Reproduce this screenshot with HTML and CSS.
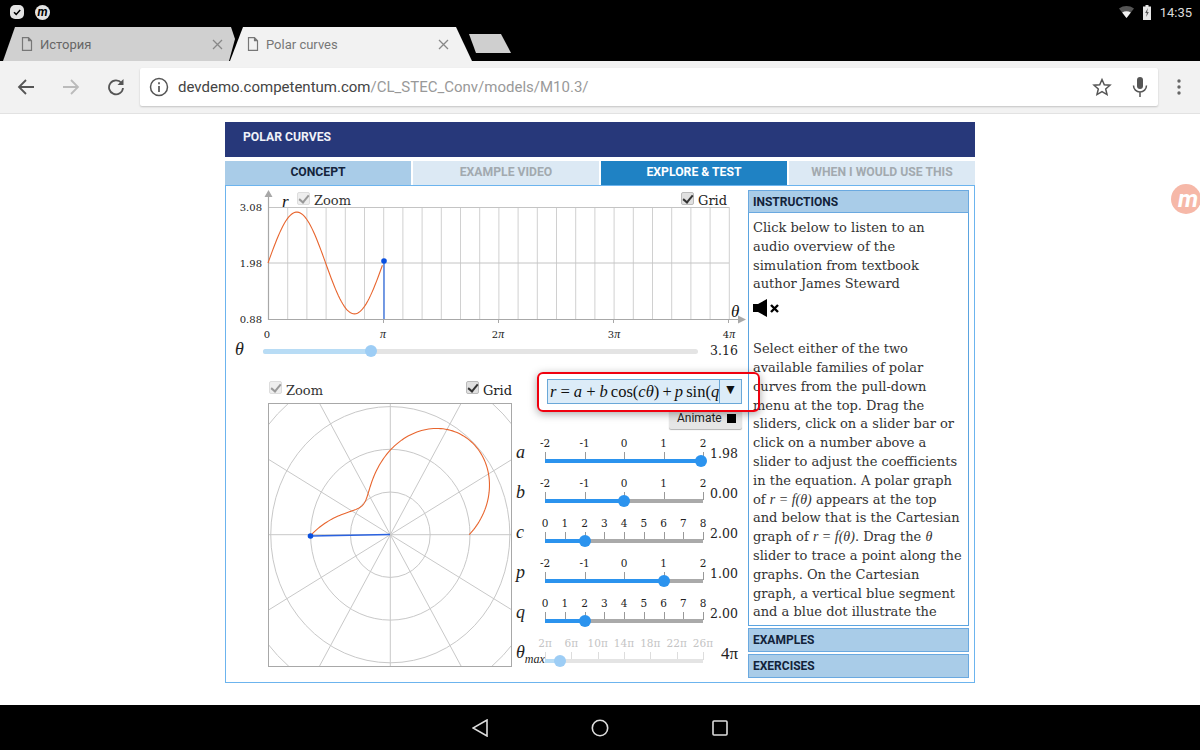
FILE: index.html
```html
<!DOCTYPE html>
<html>
<head>
    <title>Polar curves</title>
    <link rel="stylesheet" href="styles.css">
</head>
<body>

    <!-- android status bar -->
    <div class="statusbar">
        <span class="note-check">
            <svg width="14" height="14" viewBox="0 0 14 14"><path d="M4 7.2l2.2 2.2L10.2 5" fill="none" stroke="#000" stroke-width="1.5"/></svg>
        </span>
        <span class="note-m">m</span>
        <span class="status-right">
            <svg width="15" height="12" viewBox="0 0 15 12"><path d="M0 2.5C4.500 -0.800 10.500 -0.800 15 2.500L7.500 12Z" fill="#555"/><path d="M3.200 6.400C5.800 4.700 9.200 4.700 11.800 6.400L7.500 12Z" fill="#f2f2f2"/></svg>
            <svg width="10" height="15" viewBox="0 0 10 15"><path d="M3.500 0h3v1.500H9V15H1V1.500h2.500z" fill="#e6e6e6"/><path d="M5.800 3L3.200 8h1.600l-.6 4 2.600-5H5.200z" fill="#555"/></svg>
            <span class="clock">14:35</span>
        </span>
    </div>

    <!-- browser tabs -->
    <div class="tabstrip">
        <div class="btab btab-off">
            <svg class="doc" width="12" height="14" viewBox="0 0 12 14"><path d="M1.500 .7h6l3 3v9.600h-9zM7.500 .7v3h3" fill="none" stroke="#777" stroke-width="1.200"/></svg>
            <span>История</span>
            <svg class="close" width="11" height="11" viewBox="0 0 11 11"><path d="M1 1l9 9M10 1l-9 9" stroke="#888" stroke-width="1.300"/></svg>
        </div>
        <div class="btab btab-on">
            <svg class="doc" width="12" height="14" viewBox="0 0 12 14"><path d="M1.500 .7h6l3 3v9.600h-9zM7.500 .7v3h3" fill="none" stroke="#777" stroke-width="1.200"/></svg>
            <span>Polar curves</span>
            <svg class="close" width="11" height="11" viewBox="0 0 11 11"><path d="M1 1l9 9M10 1l-9 9" stroke="#888" stroke-width="1.300"/></svg>
        </div>
        <div class="newtab"></div>
    </div>

    <!-- browser toolbar -->
    <div class="toolbar">
        <svg class="nav-btn" width="18" height="18" viewBox="0 0 18 18"><path d="M17 9H2M9 2L2 9l7 7" fill="none" stroke="#555" stroke-width="1.800"/></svg>
        <svg class="nav-btn" width="18" height="18" viewBox="0 0 18 18"><path d="M1 9h15M9 2l7 7-7 7" fill="none" stroke="#bbb" stroke-width="1.800"/></svg>
        <svg class="nav-btn" width="18" height="18" viewBox="0 0 18 18"><path d="M14.500 5A7 7 0 1 0 16 10" fill="none" stroke="#555" stroke-width="1.800"/><path d="M16.500 1v6h-6z" fill="#555"/></svg>
        <div class="urlbar">
            <svg width="20" height="20" viewBox="0 0 20 20"><circle cx="10" cy="10" r="8.500" fill="none" stroke="#555" stroke-width="1.500"/><path d="M10 9v6M10 5.200v2" stroke="#555" stroke-width="1.700"/></svg>
            <span class="url"><b>devdemo.competentum.com</b>/CL_STEC_Conv/models/M10.3/</span>
            <svg class="star" width="20" height="20" viewBox="0 0 20 20"><path d="M10 2.500l2.300 5.200 5.700.5-4.300 3.800 1.300 5.600L10 14.700l-5 2.900 1.300-5.600L2 8.200l5.700-.5z" fill="none" stroke="#555" stroke-width="1.500"/></svg>
            <svg class="mic" width="16" height="20" viewBox="0 0 16 20"><rect x="5" y="0" width="6" height="12" rx="3" fill="#555"/><path d="M1.500 8.500a6.500 6.500 0 0 0 13 0M8 15v5" fill="none" stroke="#555" stroke-width="1.500"/></svg>
        </div>
        <svg class="dots" width="4" height="16" viewBox="0 0 4 16"><circle cx="2" cy="2" r="1.700" fill="#666"/><circle cx="2" cy="8" r="1.700" fill="#666"/><circle cx="2" cy="14" r="1.700" fill="#666"/></svg>
    </div>

    <div class="page">
        <div class="app">
            <div class="app-title">POLAR CURVES</div>
            <div class="app-tabs">
                <div class="app-tab tab-concept">CONCEPT</div>
                <div class="app-tab tab-pale">EXAMPLE VIDEO</div>
                <div class="app-tab tab-explore">EXPLORE &amp; TEST</div>
                <div class="app-tab tab-pale">WHEN I WOULD USE THIS</div>
            </div>

            <div class="app-main">
                <div class="sim">
                    <!-- cartesian graph, viewBox uses page coordinates -->
                    <div class="chart">
                        <svg width="522" height="154" viewBox="226 186 522 154">
                            <g id="cart-grid" stroke="#d0d0d0" stroke-width="1"></g>
                            <path d="M268 207.500H729M268 263H729" stroke="#c4c4c4"/>
                            <path d="M268.500 196V319.500H738" fill="none" stroke="#a8a8a8" stroke-width="1.200"/>
                            <path d="M383.500 319v4M498.500 319v4M613.500 319v4M728.500 319v4" stroke="#a8a8a8"/>
                            <path d="M268.500 190l-4 7h8zM746 319.500l-8-4v8z" fill="#a8a8a8"/>
                            <polyline id="cart-curve" fill="none" stroke="#e8652e" stroke-width="1.100"/>
                            <path d="M384 261V319" stroke="#4d7fe0" stroke-width="1.500"/>
                            <circle cx="384" cy="261" r="2.800" fill="#0a50e0"/>
                            <g class="axis-num">
                                <text x="262" y="211" text-anchor="end">3.08</text>
                                <text x="262" y="267" text-anchor="end">1.98</text>
                                <text x="262" y="323" text-anchor="end">0.88</text>
                                <text x="267" y="338" text-anchor="middle">0</text>
                                <text x="383" y="338" text-anchor="middle" class="it">π</text>
                                <text x="498" y="338" text-anchor="middle">2<tspan class="it">π</tspan></text>
                                <text x="614" y="338" text-anchor="middle">3<tspan class="it">π</tspan></text>
                                <text x="729" y="338" text-anchor="middle">4<tspan class="it">π</tspan></text>
                            </g>
                            <text x="282" y="207" class="math-big">r</text>
                            <text x="731" y="317" class="math-big">θ</text>
                        </svg>
                        <label class="check check-off chart-zoom"><i class="box"></i>Zoom</label>
                        <label class="check chart-grid"><i class="box"></i>Grid</label>
                    </div>

                    <div class="theta-row">
                        <span class="sym">θ</span>
                        <div class="theta-track"><div class="theta-fill"></div><div class="knob knob-pale" style="left: 108px"></div></div>
                        <span class="val">3.16</span>
                    </div>

                    <div class="lower">
                        <div class="polar-col">
                            <div class="polar-head">
                                <label class="check check-off"><i class="box"></i>Zoom</label>
                                <label class="check"><i class="box"></i>Grid</label>
                            </div>
                            <svg class="polar" width="244" height="264" viewBox="268 403 244 264">
                                <g id="polar-grid" fill="none" stroke="#c8c8c8" stroke-width="1"></g>
                                <polyline id="polar-curve" fill="none" stroke="#e8652e" stroke-width="1.100"/>
                                <path d="M390 534.500L311 536" stroke="#2a62e0" stroke-width="1.500"/>
                                <circle cx="310.500" cy="536" r="2.800" fill="#0a50e0"/>
                            </svg>
                        </div>

                        <div class="controls">
                            <div class="formula">
                                <div class="formula-text">r = a + b <span class="up">cos(</span>cθ<span class="up">) +</span> p <span class="up">sin(</span>q</div>
                                <div class="formula-btn">▼</div>
                            </div>
                            <div class="animate"><span>Animate</span><i class="stop"></i></div>

                            <div class="slider-row">
                                <span class="sym">a</span>
                                <div class="slider">
                                    <div class="scale"><span>-2</span><span>-1</span><span>0</span><span>1</span><span>2</span></div>
                                    <div class="track"><div class="fill" style="width: 99%"></div><div class="knob" style="left: 99%"></div></div>
                                </div>
                                <span class="val">1.98</span>
                            </div>
                            <div class="slider-row">
                                <span class="sym">b</span>
                                <div class="slider">
                                    <div class="scale"><span>-2</span><span>-1</span><span>0</span><span>1</span><span>2</span></div>
                                    <div class="track"><div class="fill" style="width: 50%"></div><div class="knob" style="left: 50%"></div></div>
                                </div>
                                <span class="val">0.00</span>
                            </div>
                            <div class="slider-row">
                                <span class="sym">c</span>
                                <div class="slider">
                                    <div class="scale"><span>0</span><span>1</span><span>2</span><span>3</span><span>4</span><span>5</span><span>6</span><span>7</span><span>8</span></div>
                                    <div class="track"><div class="fill" style="width: 25%"></div><div class="knob" style="left: 25%"></div></div>
                                </div>
                                <span class="val">2.00</span>
                            </div>
                            <div class="slider-row">
                                <span class="sym">p</span>
                                <div class="slider">
                                    <div class="scale"><span>-2</span><span>-1</span><span>0</span><span>1</span><span>2</span></div>
                                    <div class="track"><div class="fill" style="width: 75%"></div><div class="knob" style="left: 75%"></div></div>
                                </div>
                                <span class="val">1.00</span>
                            </div>
                            <div class="slider-row">
                                <span class="sym">q</span>
                                <div class="slider">
                                    <div class="scale"><span>0</span><span>1</span><span>2</span><span>3</span><span>4</span><span>5</span><span>6</span><span>7</span><span>8</span></div>
                                    <div class="track"><div class="fill" style="width: 25%"></div><div class="knob" style="left: 25%"></div></div>
                                </div>
                                <span class="val">2.00</span>
                            </div>
                            <div class="slider-row slider-faded">
                                <span class="sym">θ<sub>max</sub></span>
                                <div class="slider">
                                    <div class="scale"><span>2π</span><span>6π</span><span>10π</span><span>14π</span><span>18π</span><span>22π</span><span>26π</span></div>
                                    <div class="track"><div class="fill" style="width: 9.5%"></div><div class="knob knob-pale" style="left: 9.5%"></div></div>
                                </div>
                                <span class="val val-pi">4π</span>
                            </div>
                        </div>
                    </div>
                </div>

                <div class="side">
                    <div class="side-head">INSTRUCTIONS</div>
                    <div class="side-body">
                        Click below to listen to an<br>
                        audio overview of the<br>
                        simulation from textbook<br>
                        author James Steward
                        <div class="mute">
                            <svg width="27" height="18" viewBox="0 0 27 18"><path d="M0 5h5l9-5v18l-9-5H0z" fill="#000"/><path d="M18 6l7 7M25 6l-7 7" stroke="#000" stroke-width="2.400"/></svg>
                        </div>
                        Select either of the two<br>
                        available families of polar<br>
                        curves from the pull-down<br>
                        menu at the top. Drag the<br>
                        sliders, click on a slider bar or<br>
                        click on a number above a<br>
                        slider to adjust the coefficients<br>
                        in the equation. A polar graph<br>
                        of <em>r = f(θ)</em> appears at the top<br>
                        and below that is the Cartesian<br>
                        graph of <em>r = f(θ)</em>. Drag the <em>θ</em><br>
                        slider to trace a point along the<br>
                        graphs. On the Cartesian<br>
                        graph, a vertical blue segment<br>
                        and a blue dot illustrate the
                    </div>
                    <div class="side-head side-fold">EXAMPLES</div>
                    <div class="side-head side-fold">EXERCISES</div>
                </div>
            </div>
        </div>
        <div class="float-m"><span>m</span></div>
    </div>

    <!-- android nav bar -->
    <div class="navbar">
        <svg width="16" height="18" viewBox="0 0 16 18"><path d="M15 1v16L1 9z" fill="none" stroke="#ddd" stroke-width="1.600"/></svg>
        <svg width="18" height="18" viewBox="0 0 18 18"><circle cx="9" cy="9" r="7.700" fill="none" stroke="#ddd" stroke-width="1.600"/></svg>
        <svg width="16" height="16" viewBox="0 0 16 16"><rect x="1" y="1" width="14" height="14" rx="1" fill="none" stroke="#ddd" stroke-width="1.600"/></svg>
    </div>

    <script src="script.js"></script>
</body>
</html>
```

FILE: styles.css
```css
body {
    display: flex;
    flex-direction: column;
    height: 100vh;
    margin: 0;
    overflow: hidden;
    background-color: #ffffff;
    font-family: 'Roboto', sans-serif;
}

/* Android bars */
.statusbar {
    display: flex;
    align-items: center;
    height: 27px;
    padding: 0 8px 3px 10px;
    box-sizing: border-box;
    background-color: #000;
}
.note-check {
    display: flex;
    justify-content: center;
    align-items: center;
    width: 14px;
    height: 14px;
    border-radius: 5px;
    background-color: #e4e4e4;
}
.note-m {
    display: flex;
    justify-content: center;
    align-items: center;
    width: 15px;
    height: 15px;
    margin-left: 11px;
    border-radius: 50%;
    background-color: #e4e4e4;
    color: #000;
    font-size: 12px;
    line-height: 12px;
    font-weight: bold;
    font-style: italic;
}
.status-right {
    display: flex;
    align-items: center;
    gap: 8px;
    margin-left: auto;
}
.clock {
    color: #dcdcdc;
    font-size: 13px;
}
.navbar {
    display: flex;
    justify-content: center;
    align-items: center;
    gap: 103px;
    height: 45px;
    background-color: #000;
}

/* Browser chrome */
.tabstrip {
    display: flex;
    height: 34px;
    padding-left: 3px;
    background-color: #000;
    font-size: 13px;
}
.btab {
    display: flex;
    align-items: center;
    box-sizing: border-box;
    height: 34px;
}
.btab .doc {
    margin-right: 7px;
}
.btab .close {
    margin-left: auto;
}
.btab-off {
    width: 233px;
    padding: 0 13px 0 18px;
    background-color: #d0d0d0;
    color: #666;
    clip-path: polygon(12px 0, 228px 0, 232px 12px, 226px 100%, 0 100%);
}
.btab-on {
    width: 242px;
    margin-left: -6px;
    padding: 0 23px 0 17px;
    background-color: #f2f2f2;
    color: #777;
    clip-path: polygon(13px 0, 226px 0, 100% 100%, 0 100%);
}
.newtab {
    width: 42px;
    height: 19px;
    margin: 7px 0 0 -3px;
    background-color: #cfcfcf;
    clip-path: polygon(0 0, 32px 0, 100% 100%, 7px 100%);
}
.toolbar {
    display: flex;
    align-items: center;
    height: 53px;
    box-sizing: border-box;
    padding: 0 0 1px 17px;
    background-color: #f2f2f2;
    border-bottom: 1px solid #e2e2e2;
}
.nav-btn {
    margin-right: 27px;
}
.urlbar {
    display: flex;
    align-items: center;
    width: 1018px;
    height: 38px;
    margin-left: -12px;
    padding: 0 9px;
    box-sizing: border-box;
    background-color: #ffffff;
    border-radius: 2px;
    box-shadow: 0px 1px 2px rgba(0, 0, 0, 0.2);
}
.url {
    margin-left: 9px;
    color: #999;
    font-size: 15px;
}
.url b {
    color: #444;
    font-weight: normal;
}
.star {
    margin-left: auto;
}
.mic {
    margin: 0 1px 0 20px;
}
.dots {
    margin-left: 19px;
}

/* Page */
.page {
    position: relative;
    flex: 1;
    overflow: hidden;
}
.float-m {
    position: absolute;
    top: 70px;
    right: -1px;
    display: flex;
    justify-content: center;
    align-items: center;
    width: 30px;
    height: 30px;
    border-radius: 50%;
    background-color: #f6b8a8;
    color: #ffffff;
    font-size: 24px;
    line-height: 24px;
    font-weight: bold;
    font-style: italic;
}
.float-m span {
    margin-left: 4px;
}
.app {
    width: 750px;
    margin: 8px auto 0;
}
.app-title {
    height: 35px;
    padding: 8px 0 0 18px;
    box-sizing: border-box;
    background-color: #27387a;
    color: #f0f2f8;
    font-size: 12.2px;
    line-height: 15px;
    font-weight: bold;
}
.app-tabs {
    display: grid;
    grid-template-columns: repeat(4, 1fr);
    gap: 2px;
    margin-top: 4px;
}
.app-tab {
    height: 24px;
    text-align: center;
    font-size: 12.2px;
    line-height: 23px;
    font-weight: bold;
}
.tab-concept {
    background-color: #a9cce8;
    color: #14243c;
}
.tab-pale {
    background-color: #dce9f4;
    color: #a2a9af;
}
.tab-explore {
    background-color: #1f82c4;
    color: #ffffff;
}
.app-main {
    display: flex;
    height: 498px;
    box-sizing: border-box;
    border: 1px solid #6cb4ee;
}

/* Simulation */
.sim {
    width: 522px;
}
.chart {
    position: relative;
    height: 154px;
}
.chart svg,
.polar {
    display: block;
}
.axis-num {
    font-family: 'DejaVu Serif', serif;
    font-size: 10px;
    fill: #222;
}
.it,
.math-big {
    font-family: 'Liberation Serif', serif;
    font-style: italic;
}
.axis-num .it {
    font-size: 12px;
}
.math-big {
    font-size: 17px;
    fill: #111;
}
.check {
    display: flex;
    align-items: center;
    gap: 4px;
    color: #222;
    font-family: 'DejaVu Serif', serif;
    font-size: 13px;
    line-height: 14px;
}
.box {
    position: relative;
    top: -3px;
    width: 13px;
    height: 13px;
    box-sizing: border-box;
    border-radius: 2px;
    border: 1px solid #bbb;
    background-color: #e0e0e0;
}
.box::after {
    content: "";
    position: absolute;
    left: 3px;
    top: 0;
    width: 4px;
    height: 8px;
    border: solid #333;
    border-width: 0 2px 2px 0;
    transform: rotate(40deg);
}
.check-off {
    color: #333;
}
.check-off .box {
    border-color: #ddd;
    background-color: #eeeeee;
}
.check-off .box::after {
    border-color: #999;
}
.chart-zoom {
    position: absolute;
    left: 71px;
    top: 8px;
}
.chart-grid {
    position: absolute;
    left: 455px;
    top: 8px;
}
.theta-row {
    display: flex;
    align-items: center;
    height: 22px;
    padding-left: 9px;
}
.sym {
    padding-bottom: 3px;
    font-family: 'Liberation Serif', serif;
    font-style: italic;
    font-size: 18px;
    color: #222;
}
.theta-row .sym {
    width: 28px;
}
.theta-track {
    position: relative;
    width: 435px;
    height: 5px;
    border-radius: 3px;
    background-color: #e4e4e4;
}
.theta-fill {
    width: 108px;
    height: 5px;
    border-radius: 3px;
    background-color: #b8dcf5;
}
.val {
    width: 30px;
    margin-left: 12px;
    padding-bottom: 2px;
    font-family: 'DejaVu Serif', serif;
    font-size: 12.5px;
    color: #222;
}
.lower {
    display: flex;
    padding-left: 42px;
}
.polar-col {
    width: 248px;
}
.polar-head {
    display: flex;
    justify-content: space-between;
    width: 244px;
    height: 41px;
    padding: 16px 0 0 1px;
    box-sizing: border-box;
}
.polar {
    outline: 1px solid #a8a8a8;
    outline-offset: -1px;
}

/* Formula and sliders */
.controls {
    width: 226px;
    padding-top: 17px;
}
.formula {
    position: relative;
    display: flex;
    width: 195px;
    height: 25px;
    margin-left: 31px;
    box-sizing: border-box;
    border: 1px solid #6aa8d8;
    background-color: #dcecf8;
}
.formula::after {
    content: "";
    position: absolute;
    top: -8px;
    right: -19px;
    bottom: -9px;
    left: -11px;
    border: 2px solid #f0000e;
    border-radius: 6px;
    box-shadow: 0px 2px 8px rgba(0, 0, 0, 0.35);
    z-index: 2;
}
.formula-text {
    width: 172px;
    padding-left: 2px;
    box-sizing: border-box;
    overflow: hidden;
    white-space: nowrap;
    border-right: 1px solid #6aa8d8;
    font-family: 'Liberation Serif', serif;
    font-style: italic;
    font-size: 16.5px;
    line-height: 23px;
    word-spacing: -1px;
    color: #111;
}
.up {
    font-style: normal;
}
.formula-btn {
    flex: 1;
    text-align: center;
    font-size: 14px;
    line-height: 19px;
    color: #111;
}
.animate {
    display: flex;
    align-items: center;
    justify-content: space-between;
    width: 73px;
    height: 19px;
    margin: 6px 0 5px 153px;
    padding: 0 6px 3px 8px;
    box-sizing: border-box;
    background-color: #e6e6e6;
    border-radius: 2px;
    box-shadow: 0px 1px 1px rgba(0, 0, 0, 0.3);
    font-size: 12px;
    color: #222;
}
.stop {
    width: 9px;
    height: 9px;
    background-color: #000;
}
.slider-row {
    display: flex;
    align-items: center;
    height: 40px;
}
.slider-row .sym {
    width: 29px;
    white-space: nowrap;
}
.slider-row sub {
    font-size: 12px;
    line-height: 0;
}
.slider {
    width: 158px;
    height: 40px;
    flex: none;
}
.scale {
    display: flex;
    justify-content: space-between;
    height: 22px;
    margin-top: 3px;
    font-family: 'DejaVu Serif', serif;
    font-size: 10.5px;
    line-height: 13px;
    color: #222;
}
.scale span {
    position: relative;
    display: flex;
    justify-content: center;
    width: 0;
    white-space: nowrap;
}
.scale span::after {
    content: "";
    position: absolute;
    top: 15px;
    left: 0;
    width: 1px;
    height: 8px;
    background-color: #999;
}
.track {
    position: relative;
    height: 4px;
    background-color: #aaaaaa;
}
.fill {
    height: 4px;
    background-color: #2b93ee;
}
.knob {
    position: absolute;
    top: 50%;
    width: 12px;
    height: 12px;
    margin: -6px 0 0 -6px;
    border-radius: 50%;
    background-color: #2b93ee;
}
.knob-pale {
    background-color: #9dcdf5;
}
.slider-row .val {
    margin-left: 7px;
}
.slider-faded .scale {
    color: #c4c4c4;
}
.slider-faded .scale span::after {
    background-color: #dddddd;
}
.slider-faded .track {
    background-color: #e4e4e4;
}
.slider-faded .fill {
    background-color: #b8dcf5;
}
.slider-row .val-pi {
    width: 28px;
    padding: 0;
    text-align: right;
    font-family: 'Liberation Serif', serif;
    font-size: 17px;
}

/* Instructions panel */
.side {
    width: 221px;
    padding-top: 4px;
}
.side-head {
    height: 23px;
    padding-left: 4px;
    box-sizing: border-box;
    background-color: #a9cce8;
    border: 1px solid #6aa9e0;
    color: #12233a;
    font-size: 12px;
    line-height: 22px;
    font-weight: bold;
}
.side-body {
    height: 413px;
    padding: 6px 4px 0;
    box-sizing: border-box;
    overflow: hidden;
    white-space: nowrap;
    border: solid #5ba4e0;
    border-width: 0 1px 1px;
    font-family: 'DejaVu Serif', serif;
    font-size: 13px;
    line-height: 18.8px;
    color: #333;
}
.side-body em {
    font-family: 'Liberation Serif', serif;
    font-size: 14px;
}
.mute {
    height: 46px;
    padding-top: 5px;
    box-sizing: border-box;
}
.side-fold {
    height: 24px;
    margin-top: 2px;
}
```

FILE: script.js
```js
// draws the grid lines and the curve r = 1.98 + sin(2 theta) on both graphs
var NS = 'http://www.w3.org/2000/svg';

function add(group, tag, attrs) {
    var el = document.createElementNS(NS, tag);
    for (var key in attrs) {
        el.setAttribute(key, attrs[key]);
    }
    group.appendChild(el);
}

function r(t) {
    return 1.98 + Math.sin(2 * t);
}

// cartesian graph
var cartGrid = document.getElementById('cart-grid');
for (var i = 1; i <= 24; i++) {
    var gx = 268.5 + i * 19.2;
    add(cartGrid, 'line', { x1: gx, y1: 207, x2: gx, y2: 319 });
}

var cartPoints = [];
for (var t = 0; t <= 3.16; t += 0.04) {
    cartPoints.push((268 + t * 36.68) + ',' + (263 - 50.9 * Math.sin(2 * t)));
}
document.getElementById('cart-curve').setAttribute('points', cartPoints.join(' '));

// polar graph
var CX = 390.3, CY = 534.7, SX = 39.85, SY = 42.7;
var polarGrid = document.getElementById('polar-grid');
for (var ring = 1; ring <= 4; ring++) {
    add(polarGrid, 'ellipse', { cx: CX, cy: CY, rx: ring * SX, ry: ring * SY });
}
for (var a = 0; a < 6; a++) {
    var ang = a * Math.PI / 6;
    var dx = Math.cos(ang) * 5 * SX, dy = Math.sin(ang) * 5 * SY;
    add(polarGrid, 'line', { x1: CX - dx, y1: CY + dy, x2: CX + dx, y2: CY - dy });
}

var polarPoints = [];
for (var p = 0; p <= 3.16; p += 0.02) {
    polarPoints.push((CX + SX * r(p) * Math.cos(p)) + ',' + (CY - SY * r(p) * Math.sin(p)));
}
document.getElementById('polar-curve').setAttribute('points', polarPoints.join(' '));
```
